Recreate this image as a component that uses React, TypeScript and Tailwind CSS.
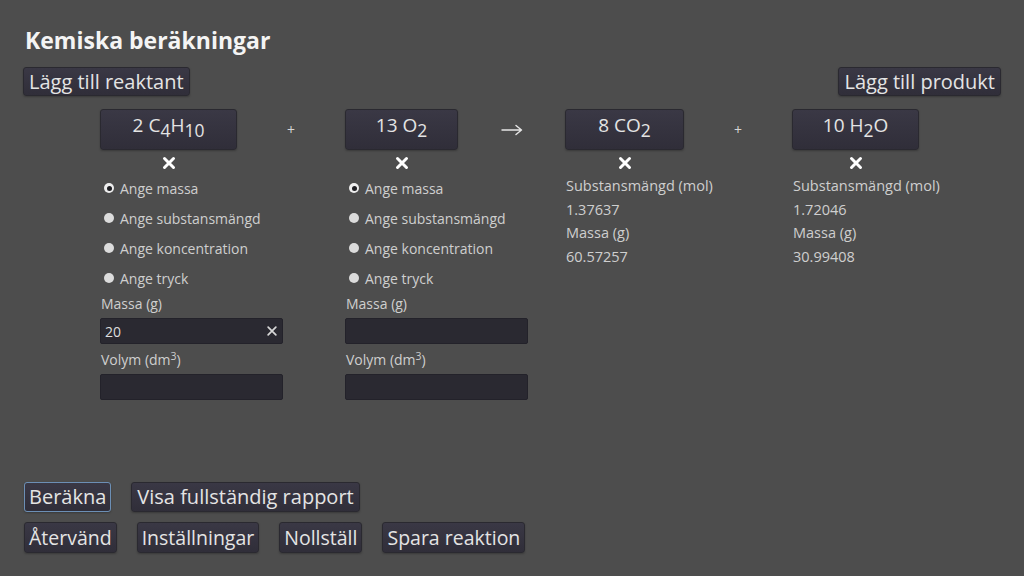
import React from 'react';

// Knapp i samma mörka stil som resten av appen
const Btn = ({ children, focused = false, className = '' }: { children: React.ReactNode; focused?: boolean; className?: string }) => (
  <button
    className={`whitespace-nowrap rounded-[3px] border bg-linear-to-b from-[#3a3845] to-[#302e39] text-[#e4e4e4] shadow-[0_1px_2px_rgba(0,0,0,0.25)] ${
      focused ? 'border-[#6c8fb5]' : 'border-[#2a2930]'
    } ${className}`}
  >
    {children}
  </button>
);

const Sub = ({ children }: { children: React.ReactNode }) => (
  <span className="align-[-5px] text-[0.92em]">{children}</span>
);

const Cross = ({ size = 14, color = '#ffffff', width = 3 }: { size?: number; color?: string; width?: number }) => (
  <svg width={size} height={size} viewBox="0 0 14 14">
    <path d="M2.5 2.5 L11.5 11.5 M11.5 2.5 L2.5 11.5" stroke={color} strokeWidth={width} strokeLinecap="round" />
  </svg>
);

const Arrow = () => (
  <svg width="22" height="12" viewBox="0 0 22 12" className="mx-auto">
    <path d="M1 6 H20 M15 1.5 L20.5 6 L15 10.5" stroke="#e6e6e6" strokeWidth="1.4" fill="none" strokeLinecap="round" strokeLinejoin="round" />
  </svg>
);

const Radio = ({ label, checked = false }: { label: string; checked?: boolean }) => (
  <div className="flex h-[30px] items-center gap-[6px] pl-1">
    {checked ? (
      <span className="flex h-[10px] w-[10px] items-center justify-center rounded-full bg-[#eeeeee]">
        <span className="h-[5px] w-[5px] rounded-full bg-[#1e1e22]" />
      </span>
    ) : (
      <span className="h-[10px] w-[10px] rounded-full bg-[#dcdcdc]" />
    )}
    <span>{label}</span>
  </div>
);

const ReactantForm = ({ massa }: { massa?: string }) => (
  <div className="flex w-[183px] flex-col whitespace-nowrap text-[14px] text-[#cfcfcf]">
    <div className="mt-[3px] flex flex-col">
      <Radio label="Ange massa" checked />
      <Radio label="Ange substansmängd" />
      <Radio label="Ange koncentration" />
      <Radio label="Ange tryck" />
    </div>
    <div className="pl-[1px] leading-[22px]">Massa (g)</div>
    <div className="mt-[3px] flex h-[26px] items-center justify-between rounded-[2px] border border-[#23222a] bg-[#2a2931] px-[4px] text-[#dedede]">
      <span>{massa ?? ''}</span>
      {massa && <Cross size={12} color="#d8d8d8" width={2} />}
    </div>
    <div className="mt-[3px] h-[25px] pl-[1px] leading-[25px]">
      Volym (dm<sup className="text-[0.75em]">3</sup>)
    </div>
    <div className="mt-[2px] h-[26px] rounded-[2px] border border-[#23222a] bg-[#2a2931]" />
  </div>
);

const ProductInfo = ({ mol, massa }: { mol: string; massa: string }) => (
  <div className="mt-[4px] flex flex-col whitespace-nowrap pl-[1px] text-[14.5px] leading-[23.5px] text-[#cfcfcf]">
    <div>Substansmängd (mol)</div>
    <div>{mol}</div>
    <div>Massa (g)</div>
    <div>{massa}</div>
  </div>
);

const Formula = ({ children, w }: { children: React.ReactNode; w: string }) => (
  <Btn className={`${w} h-[41px] text-[19px] leading-none`}>
    <span className="relative -top-[2px]">{children}</span>
  </Btn>
);

const App = () => {
  return (
    <div className="flex h-screen w-full flex-col overflow-hidden bg-[#4d4d4d] pb-[23px] pl-[23px] pr-[23px] pt-[26px] font-['Open_Sans',sans-serif]">
      <h1 className="pl-[2px] text-[23px] font-bold leading-[28px] text-[#f4f4f4]">Kemiska beräkningar</h1>

      <div className="mt-[13px] flex justify-between">
        <Btn className="h-[29px] px-[5px] text-[20px] leading-none">Lägg till reaktant</Btn>
        <Btn className="h-[29px] px-[5px] text-[20px] leading-none">Lägg till produkt</Btn>
      </div>

      <div className="ml-[77px] mt-[13px] grid grid-cols-[137px_108px_113px_107px_119px_108px_127px] items-center">
        <Formula w="w-[137px]">
          2 C<Sub>4</Sub>H<Sub>10</Sub>
        </Formula>
        <span className="text-center text-[14px] text-[#d6d6d6]">+</span>
        <Formula w="w-[113px]">
          13 O<Sub>2</Sub>
        </Formula>
        <Arrow />
        <Formula w="w-[119px]">
          8 CO<Sub>2</Sub>
        </Formula>
        <span className="text-center text-[14px] text-[#d6d6d6]">+</span>
        <Formula w="w-[127px]">
          10 H<Sub>2</Sub>O
        </Formula>

        <div className="mt-[6px] flex justify-center"><Cross /></div>
        <div />
        <div className="mt-[6px] flex justify-center"><Cross /></div>
        <div />
        <div className="mt-[6px] flex justify-center"><Cross /></div>
        <div />
        <div className="mt-[6px] flex justify-center"><Cross /></div>

        <div className="col-span-2 self-start"><ReactantForm massa="20" /></div>
        <div className="col-span-2 self-start"><ReactantForm /></div>
        <div className="col-span-2 self-start"><ProductInfo mol="1.37637" massa="60.57257" /></div>
        <div className="self-start"><ProductInfo mol="1.72046" massa="30.99408" /></div>
      </div>

      <div className="mt-auto flex flex-col gap-[10px] pl-[1px]">
        <div className="flex gap-[20px]">
          <Btn focused className="h-[30px] px-[4px] text-[20px] leading-none">Beräkna</Btn>
          <Btn className="h-[30px] px-[5px] text-[20px] leading-none">Visa fullständig rapport</Btn>
        </div>
        <div className="flex gap-[20px]">
          <Btn className="h-[31px] px-[4px] text-[19.5px] leading-none">Återvänd</Btn>
          <Btn className="h-[31px] px-[4px] text-[19.5px] leading-none">Inställningar</Btn>
          <Btn className="h-[31px] px-[4px] text-[19.5px] leading-none">Nollställ</Btn>
          <Btn className="h-[31px] px-[4px] text-[19.5px] leading-none">Spara reaktion</Btn>
        </div>
      </div>
    </div>
  );
};

export default App;
